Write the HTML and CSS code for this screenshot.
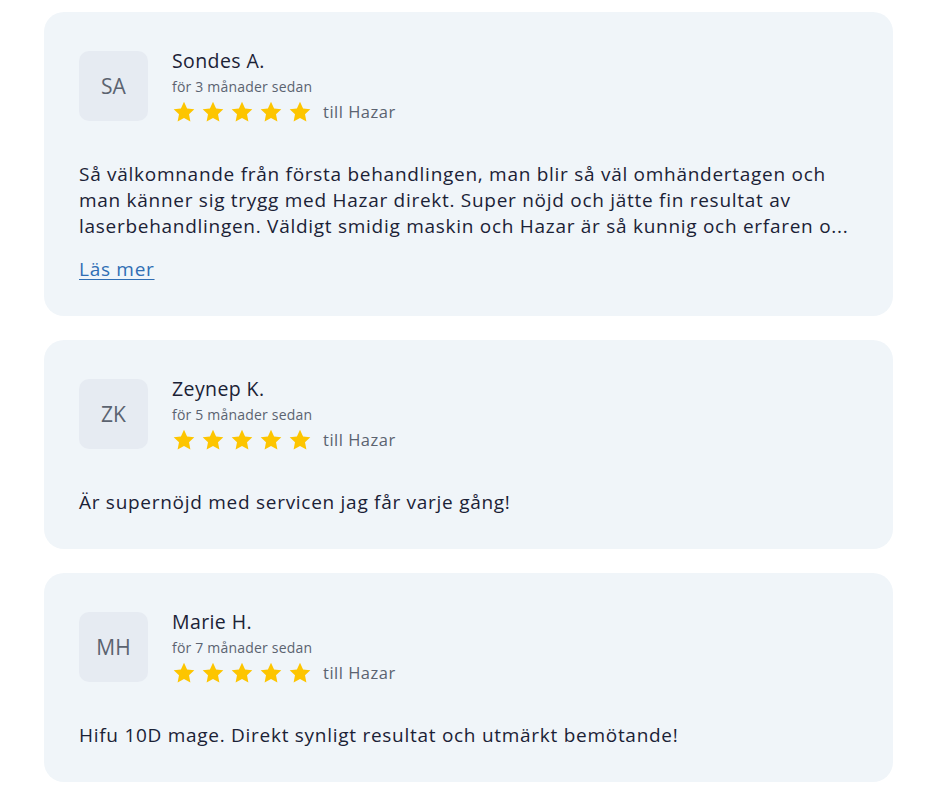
FILE: index.html
```html
<!DOCTYPE html>
<html lang="sv">
<head>
<meta charset="utf-8">
<link rel="stylesheet" href="styles.css">
</head>
<body>
<main class="reviews">
  <article class="card">
    <header class="head">
      <div class="avatar">SA</div>
      <div class="meta">
        <div class="name">Sondes A.</div>
        <div class="date">för 3 månader sedan</div>
        <div class="rating">
          <span class="stars">
            <svg viewBox="0 0 24 24"><path d="M12 1.8l3.1 6.6 7.2.9-5.3 5 1.4 7.1L12 17.9l-6.4 3.5 1.4-7.1-5.3-5 7.2-.9z"/></svg>
            <svg viewBox="0 0 24 24"><path d="M12 1.8l3.1 6.6 7.2.9-5.3 5 1.4 7.1L12 17.9l-6.4 3.5 1.4-7.1-5.3-5 7.2-.9z"/></svg>
            <svg viewBox="0 0 24 24"><path d="M12 1.8l3.1 6.6 7.2.9-5.3 5 1.4 7.1L12 17.9l-6.4 3.5 1.4-7.1-5.3-5 7.2-.9z"/></svg>
            <svg viewBox="0 0 24 24"><path d="M12 1.8l3.1 6.6 7.2.9-5.3 5 1.4 7.1L12 17.9l-6.4 3.5 1.4-7.1-5.3-5 7.2-.9z"/></svg>
            <svg viewBox="0 0 24 24"><path d="M12 1.8l3.1 6.6 7.2.9-5.3 5 1.4 7.1L12 17.9l-6.4 3.5 1.4-7.1-5.3-5 7.2-.9z"/></svg>
          </span>
          <span class="target">till Hazar</span>
        </div>
      </div>
    </header>
    <p class="text">Så välkomnande från första behandlingen, man blir så väl omhändertagen och man känner sig trygg med Hazar direkt. Super nöjd och jätte fin resultat av laserbehandlingen. Väldigt smidig maskin och Hazar är så kunnig och erfaren o...</p>
    <a class="more" href="#">Läs mer</a>
  </article>

  <article class="card">
    <header class="head">
      <div class="avatar">ZK</div>
      <div class="meta">
        <div class="name">Zeynep K.</div>
        <div class="date">för 5 månader sedan</div>
        <div class="rating">
          <span class="stars">
            <svg viewBox="0 0 24 24"><path d="M12 1.8l3.1 6.6 7.2.9-5.3 5 1.4 7.1L12 17.9l-6.4 3.5 1.4-7.1-5.3-5 7.2-.9z"/></svg>
            <svg viewBox="0 0 24 24"><path d="M12 1.8l3.1 6.6 7.2.9-5.3 5 1.4 7.1L12 17.9l-6.4 3.5 1.4-7.1-5.3-5 7.2-.9z"/></svg>
            <svg viewBox="0 0 24 24"><path d="M12 1.8l3.1 6.6 7.2.9-5.3 5 1.4 7.1L12 17.9l-6.4 3.5 1.4-7.1-5.3-5 7.2-.9z"/></svg>
            <svg viewBox="0 0 24 24"><path d="M12 1.8l3.1 6.6 7.2.9-5.3 5 1.4 7.1L12 17.9l-6.4 3.5 1.4-7.1-5.3-5 7.2-.9z"/></svg>
            <svg viewBox="0 0 24 24"><path d="M12 1.8l3.1 6.6 7.2.9-5.3 5 1.4 7.1L12 17.9l-6.4 3.5 1.4-7.1-5.3-5 7.2-.9z"/></svg>
          </span>
          <span class="target">till Hazar</span>
        </div>
      </div>
    </header>
    <p class="text">Är supernöjd med servicen jag får varje gång!</p>
  </article>

  <article class="card">
    <header class="head">
      <div class="avatar">MH</div>
      <div class="meta">
        <div class="name">Marie H.</div>
        <div class="date">för 7 månader sedan</div>
        <div class="rating">
          <span class="stars">
            <svg viewBox="0 0 24 24"><path d="M12 1.8l3.1 6.6 7.2.9-5.3 5 1.4 7.1L12 17.9l-6.4 3.5 1.4-7.1-5.3-5 7.2-.9z"/></svg>
            <svg viewBox="0 0 24 24"><path d="M12 1.8l3.1 6.6 7.2.9-5.3 5 1.4 7.1L12 17.9l-6.4 3.5 1.4-7.1-5.3-5 7.2-.9z"/></svg>
            <svg viewBox="0 0 24 24"><path d="M12 1.8l3.1 6.6 7.2.9-5.3 5 1.4 7.1L12 17.9l-6.4 3.5 1.4-7.1-5.3-5 7.2-.9z"/></svg>
            <svg viewBox="0 0 24 24"><path d="M12 1.8l3.1 6.6 7.2.9-5.3 5 1.4 7.1L12 17.9l-6.4 3.5 1.4-7.1-5.3-5 7.2-.9z"/></svg>
            <svg viewBox="0 0 24 24"><path d="M12 1.8l3.1 6.6 7.2.9-5.3 5 1.4 7.1L12 17.9l-6.4 3.5 1.4-7.1-5.3-5 7.2-.9z"/></svg>
          </span>
          <span class="target">till Hazar</span>
        </div>
      </div>
    </header>
    <p class="text">Hifu 10D mage. Direkt synligt resultat och utmärkt bemötande!</p>
  </article>
</main>
</body>
</html>
```

FILE: styles.css
```css
* { box-sizing: border-box; }

html, body {
  margin: 0;
  padding: 0;
  background: #ffffff;
}

body {
  font-family: "Open Sans", "Noto Sans", Lato, sans-serif;
  color: #1b2236;
}

.reviews {
  width: 849px;
  margin: 12px 0 0 44px;
  display: flex;
  flex-direction: column;
  gap: 24px;
}

.card {
  background: #f0f5f9;
  border-radius: 20px;
  padding: 39px 34px 34px 35px;
}

.head {
  display: flex;
  gap: 24px;
  align-items: flex-start;
}

.avatar {
  width: 69px;
  height: 70px;
  flex: none;
  border-radius: 10px;
  background: #e6ebf2;
  color: #5b6370;
  font-size: 21px;
  display: flex;
  align-items: center;
  justify-content: center;
}

.meta {
  display: flex;
  flex-direction: column;
}

.name {
  font-size: 19.5px;
  line-height: 22px;
  letter-spacing: 0.4px;
  margin-top: -1px;
}

.date {
  font-size: 14px;
  line-height: 18px;
  letter-spacing: 0.2px;
  color: #5b6370;
  margin-top: 6px;
}

.rating {
  display: flex;
  align-items: center;
  gap: 11px;
  margin-top: 4px;
}

.stars {
  display: flex;
  gap: 5px;
}

.stars svg {
  width: 24px;
  height: 24px;
  fill: #fdc500;
  display: block;
}

.target {
  font-size: 16.5px;
  line-height: 22px;
  letter-spacing: 0.5px;
  color: #5b6370;
}

.text {
  margin: 37px 0 0;
  font-size: 19px;
  line-height: 26px;
  letter-spacing: 0.72px;
}

.more {
  display: inline-block;
  margin-top: 17px;
  font-size: 19px;
  line-height: 26px;
  letter-spacing: 0.72px;
  color: #2f6eb4;
  text-decoration: underline;
  text-underline-offset: 3px;
  text-decoration-thickness: 1px;
}
```
